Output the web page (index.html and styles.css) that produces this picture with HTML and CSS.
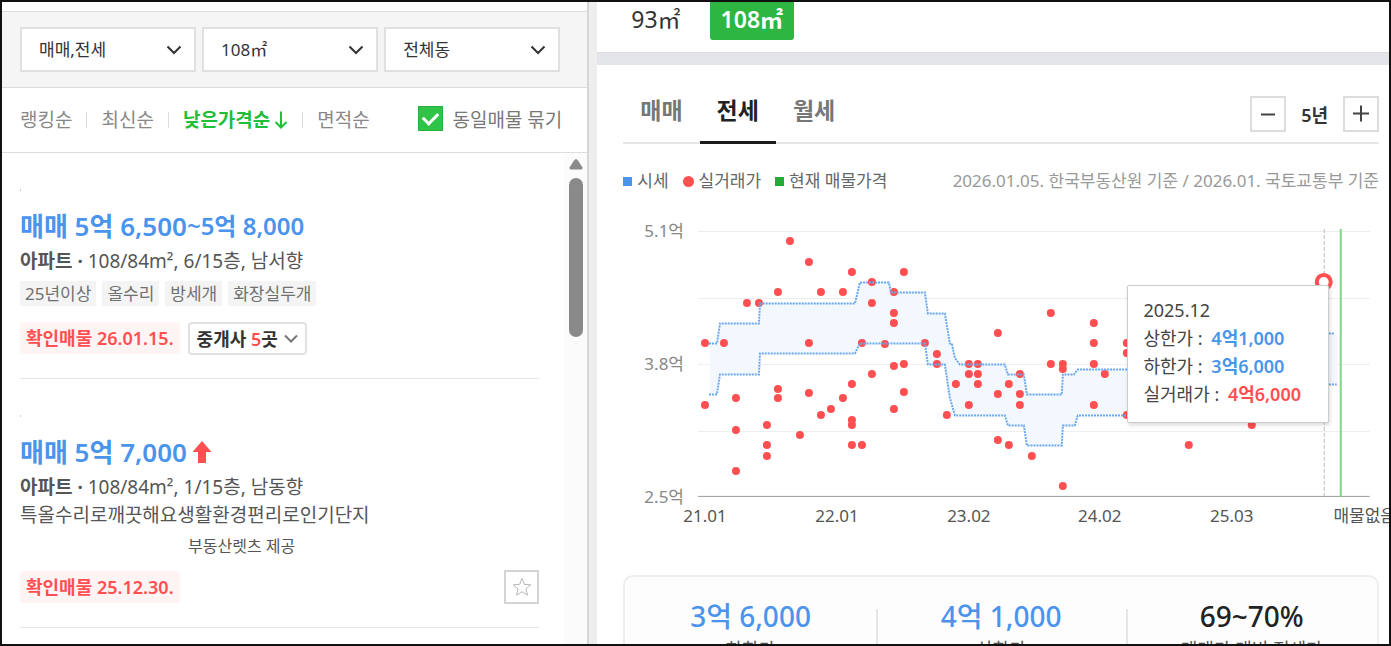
FILE: index.html
```html
<!DOCTYPE html>
<html lang="ko">
<head>
    <meta charset="UTF-8">
    <meta name="viewport" content="width=device-width, initial-scale=1.0">
    <title>매물 시세</title>
    <link rel="stylesheet" href="styles.css">
</head>
<body>
    <div class="page">
        <section class="list-panel">
            <div class="filters">
                <div class="select-box">
                    <select aria-label="거래유형"><option>매매,전세</option></select>
                    <svg width="16" height="10" viewBox="0 0 16 10"><path d="M1.5 1.5 L8 8 L14.5 1.5"/></svg>
                </div>
                <div class="select-box">
                    <select aria-label="면적"><option>108㎡</option></select>
                    <svg width="16" height="10" viewBox="0 0 16 10"><path d="M1.5 1.5 L8 8 L14.5 1.5"/></svg>
                </div>
                <div class="select-box">
                    <select aria-label="동"><option>전체동</option></select>
                    <svg width="16" height="10" viewBox="0 0 16 10"><path d="M1.5 1.5 L8 8 L14.5 1.5"/></svg>
                </div>
            </div>

            <div class="sort-bar">
                <div class="sorts">
                    <button>랭킹순</button>
                    <button>최신순</button>
                    <button class="on">낮은가격순<svg width="14" height="18" viewBox="0 0 14 18"><path d="M7 0.5 V16.5 M1.5 11 L7 16.5 L12.5 11"/></svg></button>
                    <button>면적순</button>
                </div>
                <label class="group-check"><input type="checkbox" checked>동일매물 묶기</label>
            </div>

            <div class="list-body">
                <div class="items">
                    <article class="item">
                        <div class="mark"></div>
                        <a class="price" href="#">매매 5억 6,500<span>~5억 8,000</span></a>
                        <p class="info"><b>아파트 ·</b> 108/84m², 6/15층, 남서향</p>
                        <div class="tags">
                            <span>25년이상</span>
                            <span>올수리</span>
                            <span>방세개</span>
                            <span>화장실두개</span>
                        </div>
                        <div class="item-foot">
                            <span class="confirm">확인매물 26.01.15.</span>
                            <button class="agents"><span>중개사 <em>5</em>곳</span><svg width="14" height="9" viewBox="0 0 14 9"><path d="M1 1.5 L7 7.5 L13 1.5"/></svg></button>
                        </div>
                    </article>
                    <article class="item">
                        <div class="mark"></div>
                        <a class="price" href="#">매매 5억 7,000<svg width="20" height="24" viewBox="0 0 20 24"><path d="M10 1 L19.5 12 H14 V23 H6 V12 H0.5 Z"/></svg></a>
                        <p class="info"><b>아파트 ·</b> 108/84m², 1/15층, 남동향</p>
                        <p class="info">특올수리로깨끗해요생활환경편리로인기단지</p>
                        <p class="provider">부동산렛츠 제공</p>
                        <div class="item-foot">
                            <span class="confirm">확인매물 25.12.30.</span>
                            <button class="star" aria-label="관심매물"><svg width="20" height="20" viewBox="0 0 20 20"><path d="M10 1.5 L12.4 7.4 L18.8 7.8 L13.9 11.9 L15.5 18.2 L10 14.7 L4.5 18.2 L6.1 11.9 L1.2 7.8 L7.6 7.4 Z"/></svg></button>
                        </div>
                    </article>
                </div>
                <div class="scrollbar">
                    <svg width="14" height="11" viewBox="0 0 14 11"><path d="M7 0 Q8 0 9 1.5 L13.5 8.5 Q14 10.5 12 10.5 H2 Q0 10.5 0.5 8.5 L5 1.5 Q6 0 7 0 Z"/></svg>
                    <div class="thumb"></div>
                </div>
            </div>
        </section>

        <section class="detail-panel">
            <div class="sizes">
                <button>93㎡</button>
                <button class="on">108㎡</button>
            </div>

            <div class="market">
                <div class="tab-row">
                    <nav class="tabs">
                        <button>매매</button>
                        <button class="on">전세</button>
                        <button>월세</button>
                    </nav>
                    <div class="period">
                        <button aria-label="기간 축소"><svg width="18" height="18" viewBox="0 0 18 18"><path d="M2 9.5 H16"/></svg></button>
                        <span>5년</span>
                        <button aria-label="기간 확대"><svg width="18" height="18" viewBox="0 0 18 18"><path d="M1 8.5 H17 M9 0.5 V16.5"/></svg></button>
                    </div>
                </div>

                <div class="legend-row">
                    <ul class="legend">
                        <li class="quote">시세</li>
                        <li class="deal">실거래가</li>
                        <li class="current">현재 매물가격</li>
                    </ul>
                    <p class="source">2026.01.05. 한국부동산원 기준 / 2026.01. 국토교통부 기준</p>
                </div>

                <div class="chart">
                    <svg viewBox="0 0 756 320">
                        <g class="grid">
                            <path d="M75 16.5 H747 M75 83.5 H747 M75 149.5 H747 M75 216.5 H747"/>
                        </g>
                        <path class="area" d="M87 128 H94 L97 108 H136 L137 88 H232 L237 67 H266 L268 77 H302 L305 98 H322 L327 128 H329 L332 143 L337 149 H382 L385 159 H401 L404 179 H439 L440 159 H451 L455 154 H620 L640 118 H714 V169 H640 L620 200 H455 L452 210 H440 L439 230 H404 L401 210 H385 L382 200 H332 L327 183 L322 149 H305 L302 128 H237 L232 138 H137 L136 159 H97 L94 179 H87 Z"/>
                        <path class="axis" d="M75 281.5 H747"/>
                        <path class="cursor" d="M701.5 14 V281"/>
                        <g id="deals"></g>
                        <g class="range">
                            <path d="M86 128.5 H94 L97 108.5 H136 L137 88.5 H232 L237 67.5 H266 L268 77.5 H302 L305 98.5 H322 L327 128.5 H329 L332 143 L337 149.5 H382 L385 159.5 H401 L404 179.5 H439 L440 159.5 H451 L455 154.5 H620 L640 118.5 H712"/>
                            <path d="M86 179.5 H94 L97 159.5 H136 L137 138.5 H232 L237 128.5 H302 L305 149.5 H322 L327 183 L332 200.5 H382 L385 210.5 H401 L404 230.5 H439 L440 210.5 H452 L455 200.5 H620 L640 169.5 H714"/>
                        </g>
                        <circle class="picked" cx="701" cy="67" r="7"/>
                        <path class="now" d="M718 14 V282"/>
                        <g class="y-labels">
                            <text x="61" y="22">5.1억</text>
                            <text x="61" y="155">3.8억</text>
                            <text x="61" y="288">2.5억</text>
                        </g>
                        <g class="x-labels">
                            <text x="82" y="307">21.01</text>
                            <text x="214" y="307">22.01</text>
                            <text x="346" y="307">23.02</text>
                            <text x="477" y="307">24.02</text>
                            <text x="609" y="307">25.03</text>
                            <text x="742" y="307">매물없음</text>
                        </g>
                    </svg>
                    <div class="tooltip">
                        <p>2025.12</p>
                        <p>상한가 : <b>4억1,000</b></p>
                        <p>하한가 : <b>3억6,000</b></p>
                        <p>실거래가 : <b class="red">4억6,000</b></p>
                    </div>
                </div>

                <dl class="stats">
                    <div><dd>3억 6,000</dd><dt>하한가</dt></div>
                    <div><dd>4억 1,000</dd><dt>상한가</dt></div>
                    <div><dd class="ratio">69~70%</dd><dt>매매가 대비 전세가</dt></div>
                </dl>
            </div>
        </section>
    </div>

    <script>
        // x, y of every reported deal
        const deals = [
            [167, 26], [186, 47], [229, 57], [249, 67], [155, 77], [198, 77], [220, 77],
            [124, 88], [136, 88], [249, 88], [82, 128], [101, 128], [186, 128], [239, 128],
            [249, 159], [229, 169], [155, 174], [155, 183], [186, 178], [113, 183], [220, 183],
            [82, 190], [208, 194], [198, 200], [144, 210], [113, 215], [229, 205], [229, 210],
            [177, 220], [144, 230], [144, 241], [229, 230], [239, 230], [113, 256],
            [281, 57], [271, 77], [271, 98], [271, 108], [262, 129], [271, 151], [281, 149],
            [302, 128], [314, 139], [314, 149], [281, 177], [271, 194], [324, 200], [333, 169],
            [346, 149], [355, 149], [346, 159], [355, 159], [355, 169], [346, 190],
            [375, 118], [375, 179], [386, 169], [397, 159], [397, 179], [397, 190],
            [375, 225], [386, 230], [409, 241], [440, 271], [428, 98], [428, 149],
            [440, 149], [440, 154], [471, 108], [471, 128], [471, 149], [471, 190], [482, 159],
            [504, 128], [504, 138], [504, 200], [566, 230], [629, 210]
        ];

        let dots = "";
        deals.forEach(([x, y]) => {
            dots += `<circle cx="${x}" cy="${y}" r="4"/>`;
        });
        document.getElementById("deals").innerHTML = dots;
    </script>
</body>
</html>
```
FILE: styles.css
```css
* {
    box-sizing: border-box;
}
body {
    margin: 0;
    font-family: "Noto Sans", "Noto Sans CJK KR", sans-serif;
    font-size: 17px;
    color: #555;
    background: #fff;
}
p, ul, dl, dd {
    margin: 0;
    padding: 0;
}
button, select, input {
    font: inherit;
    color: inherit;
    margin: 0;
}
button {
    padding: 0;
    border: none;
    background: none;
    cursor: pointer;
}
svg {
    display: block;
    flex: none;
    fill: none;
}
.page {
    display: grid;
    grid-template-columns: 73fr 100fr;
    height: 100vh;
    border: 2px solid #111;
    overflow: hidden;
}

/* listing column */
.list-panel {
    display: flex;
    flex-direction: column;
    min-width: 0;
    min-height: 0;
    padding-top: 9px;
}
.filters {
    display: flex;
    gap: 6px;
    padding: 15px 27px 15px 18px;
    background: #f5f5f5;
    border-top: 1px solid #ddd;
    border-bottom: 1px solid #ddd;
}
.select-box {
    flex: 1;
    display: grid;
    align-items: center;
}
.select-box select,
.select-box svg {
    grid-area: 1 / 1;
}
.select-box select {
    width: 100%;
    height: 45px;
    padding: 0 17px;
    appearance: none;
    border: 2px solid #e0e0e0;
    border-radius: 0;
    background: #fff;
    color: #333;
}
.select-box svg {
    justify-self: end;
    margin-right: 14px;
    pointer-events: none;
    stroke: #333;
    stroke-width: 2;
}
.sort-bar {
    display: flex;
    justify-content: space-between;
    align-items: center;
    height: 65px;
    padding: 0 25px 0 18px;
    border-bottom: 1px solid #ddd;
    font-size: 19px;
    color: #888;
    white-space: nowrap;
}
.sorts {
    display: flex;
    align-items: center;
}
.sorts button {
    display: flex;
    align-items: center;
    gap: 4px;
    line-height: 28px;
}
.sorts button + button::before {
    content: "";
    width: 1px;
    height: 16px;
    margin: 0 10px 0 14px;
    background: #ddd;
}
.sorts .on {
    font-weight: 700;
    color: #1fbf3a;
}
.sorts svg {
    stroke: #1fbf3a;
    stroke-width: 2;
}
.group-check {
    display: flex;
    align-items: center;
    gap: 9px;
    padding-bottom: 3px;
    color: #777;
}
.group-check input {
    appearance: none;
    display: grid;
    place-items: center;
    width: 25px;
    height: 25px;
    background: #2fc447;
    border: 1px solid #28b03e;
}
.group-check input::before {
    content: "";
    width: 12px;
    height: 7px;
    margin-bottom: 4px;
    border-left: 3px solid #fff;
    border-bottom: 3px solid #fff;
    transform: rotate(-45deg);
}
.list-body {
    flex: 1;
    display: flex;
    min-height: 0;
    overflow: hidden;
}
.items {
    flex: 1;
    min-width: 0;
    padding: 0 25px 0 18px;
}
.item {
    display: flex;
    flex-direction: column;
    align-items: flex-start;
    padding: 36px 0 23px;
    border-bottom: 1px solid #e6e6e6;
}
.mark {
    width: 1px;
    height: 2px;
    margin-bottom: 18px;
    background: #ccc;
}
.price {
    display: flex;
    align-items: center;
    margin-bottom: 4px;
    font-size: 26px;
    font-weight: 600;
    line-height: 34px;
    color: #4a94ec;
    text-decoration: none;
    white-space: nowrap;
}
.price span {
    font-size: 24px;
}
.price svg {
    margin-left: 5px;
    fill: #ff4f51;
}
.info {
    font-size: 19px;
    line-height: 28px;
    white-space: nowrap;
}
.info b {
    font-weight: 700;
}
.tags {
    display: flex;
    gap: 6px;
    margin: 6px 0 15px;
}
.tags span {
    padding: 0 5px;
    line-height: 25px;
    background: #f4f4f4;
    color: #707070;
    white-space: nowrap;
}
.provider {
    margin: 5px 0 12px;
    padding-left: 168px;
    font-size: 16px;
    line-height: 24px;
}
.item-foot {
    display: flex;
    align-items: center;
    gap: 8px;
    align-self: stretch;
    min-height: 34px;
    font-size: 18px;
}
.confirm {
    padding: 0 6px;
    border-radius: 4px;
    background: #fff4f4;
    color: #ff4f51;
    font-weight: 600;
    line-height: 32px;
}
.agents {
    display: flex;
    align-items: center;
    gap: 6px;
    height: 33px;
    padding: 0 7px;
    border: 2px solid #e2e2e2;
    border-radius: 4px;
    color: #333;
    font-weight: 600;
}
.agents em {
    font-style: normal;
    color: #ff4f51;
}
.agents svg {
    stroke: #777;
    stroke-width: 2;
}
.star {
    display: grid;
    place-items: center;
    width: 35px;
    height: 34px;
    margin-left: auto;
    border: 2px solid #d4d4d4;
}
.star svg {
    stroke: #b8b8b8;
    stroke-width: 1;
}
.scrollbar {
    display: flex;
    flex-direction: column;
    align-items: center;
    gap: 8px;
    width: 23px;
    padding-top: 6px;
    background: #fbfbfb;
}
.scrollbar svg {
    fill: #8a8a8a;
}
.thumb {
    width: 14px;
    height: 159px;
    border-radius: 7px;
    background: #8a8a8a;
}

/* price chart column */
.detail-panel {
    min-width: 0;
    border-left: 2px solid #d6d6d6;
    box-shadow: inset 8px 0 0 #eee;
    padding-left: 8px;
    overflow: hidden;
}
.sizes {
    display: flex;
    align-items: flex-start;
    gap: 18px;
    height: 51px;
    padding-left: 23px;
    border-bottom: 1px solid #ddd;
    font-size: 23px;
    color: #333;
}
.sizes button {
    height: 38px;
    padding: 0 11px 4px;
    line-height: 34px;
}
.sizes .on {
    border-radius: 0 0 3px 3px;
    background: #2db742;
    color: #fff;
    font-weight: 600;
}
.market {
    padding: 0 10px 0 26px;
    border-top: 12px solid #e4e5e8;
}
.tab-row {
    display: flex;
    justify-content: space-between;
    align-items: flex-end;
    height: 79px;
    border-bottom: 2px solid #e6e6e6;
}
.tabs {
    display: flex;
    align-self: stretch;
    align-items: flex-end;
}
.tabs button {
    height: 66px;
    margin-bottom: -2px;
    padding: 0 17px 1px;
    border-bottom: 3px solid transparent;
    font-size: 23px;
    font-weight: 600;
    color: #777;
}
.tabs .on {
    border-color: #1c1c1c;
    color: #222;
}
.period {
    display: flex;
    align-items: center;
    gap: 15px;
    margin-bottom: 10px;
    font-size: 18px;
    font-weight: 600;
    color: #333;
}
.period button {
    display: grid;
    place-items: center;
    width: 36px;
    height: 36px;
    border: 2px solid #ddd;
}
.period svg {
    stroke: #444;
    stroke-width: 2;
}
.legend-row {
    display: flex;
    justify-content: space-between;
    padding: 25px 0 22px;
    line-height: 24px;
    white-space: nowrap;
}
.legend {
    display: flex;
    gap: 14px;
    list-style: none;
    color: #666;
}
.legend li {
    display: flex;
    align-items: center;
    gap: 5px;
}
.legend li::before {
    content: "";
    width: 9px;
    height: 9px;
    background: #4a94ec;
}
.legend .deal::before {
    width: 11px;
    height: 11px;
    border-radius: 50%;
    background: #ff4f51;
}
.legend .current::before {
    background: #22ab38;
}
.source {
    color: #999;
}

.chart {
    position: relative;
}
.chart svg {
    width: 100%;
    overflow: visible;
}
.grid path {
    stroke: #eee;
}
.area {
    fill: #f2f8fe;
}
.axis {
    stroke: #999;
}
.cursor {
    stroke: #bbb;
    stroke-dasharray: 4 2;
}
#deals {
    fill: #ff4f51;
}
.range path {
    stroke: #6aa8ee;
    stroke-width: 2;
    stroke-dasharray: 2 1;
}
.picked {
    fill: #fff;
    stroke: #ff4f51;
    stroke-width: 4;
}
.now {
    stroke: #7ed68a;
    stroke-width: 2;
}
.y-labels {
    fill: #888;
    text-anchor: end;
}
.x-labels {
    fill: #555;
    text-anchor: middle;
}
.tooltip {
    position: absolute;
    top: 22%;
    right: 50px;
    padding: 10px 27px 14px 15px;
    border: 1px solid #ccc;
    border-radius: 2px;
    background: #fff;
    box-shadow: 1px 2px 4px rgba(0, 0, 0, 0.15);
    font-size: 18px;
    line-height: 28px;
    color: #444;
    white-space: nowrap;
}
.tooltip b {
    margin-left: 4px;
    font-weight: 600;
    color: #4a94ec;
}
.tooltip .red {
    color: #ff4f51;
}
.stats {
    display: grid;
    grid-template-columns: repeat(3, 1fr);
    margin-top: 40px;
    padding: 22px 0;
    border: 2px solid #eee;
    border-radius: 10px;
    background: #fdfdfe;
    text-align: center;
}
.stats div {
    display: flex;
    flex-direction: column;
}
.stats div + div {
    background: linear-gradient(#e6e6e6, #e6e6e6) 0 10px / 2px 100% no-repeat;
}
.stats dd {
    font-size: 28px;
    font-weight: 500;
    line-height: 34px;
    color: #4a94ec;
}
.stats .ratio {
    color: #222;
}
.stats dt {
    font-size: 18px;
    line-height: 32px;
    color: #555;
}
```
